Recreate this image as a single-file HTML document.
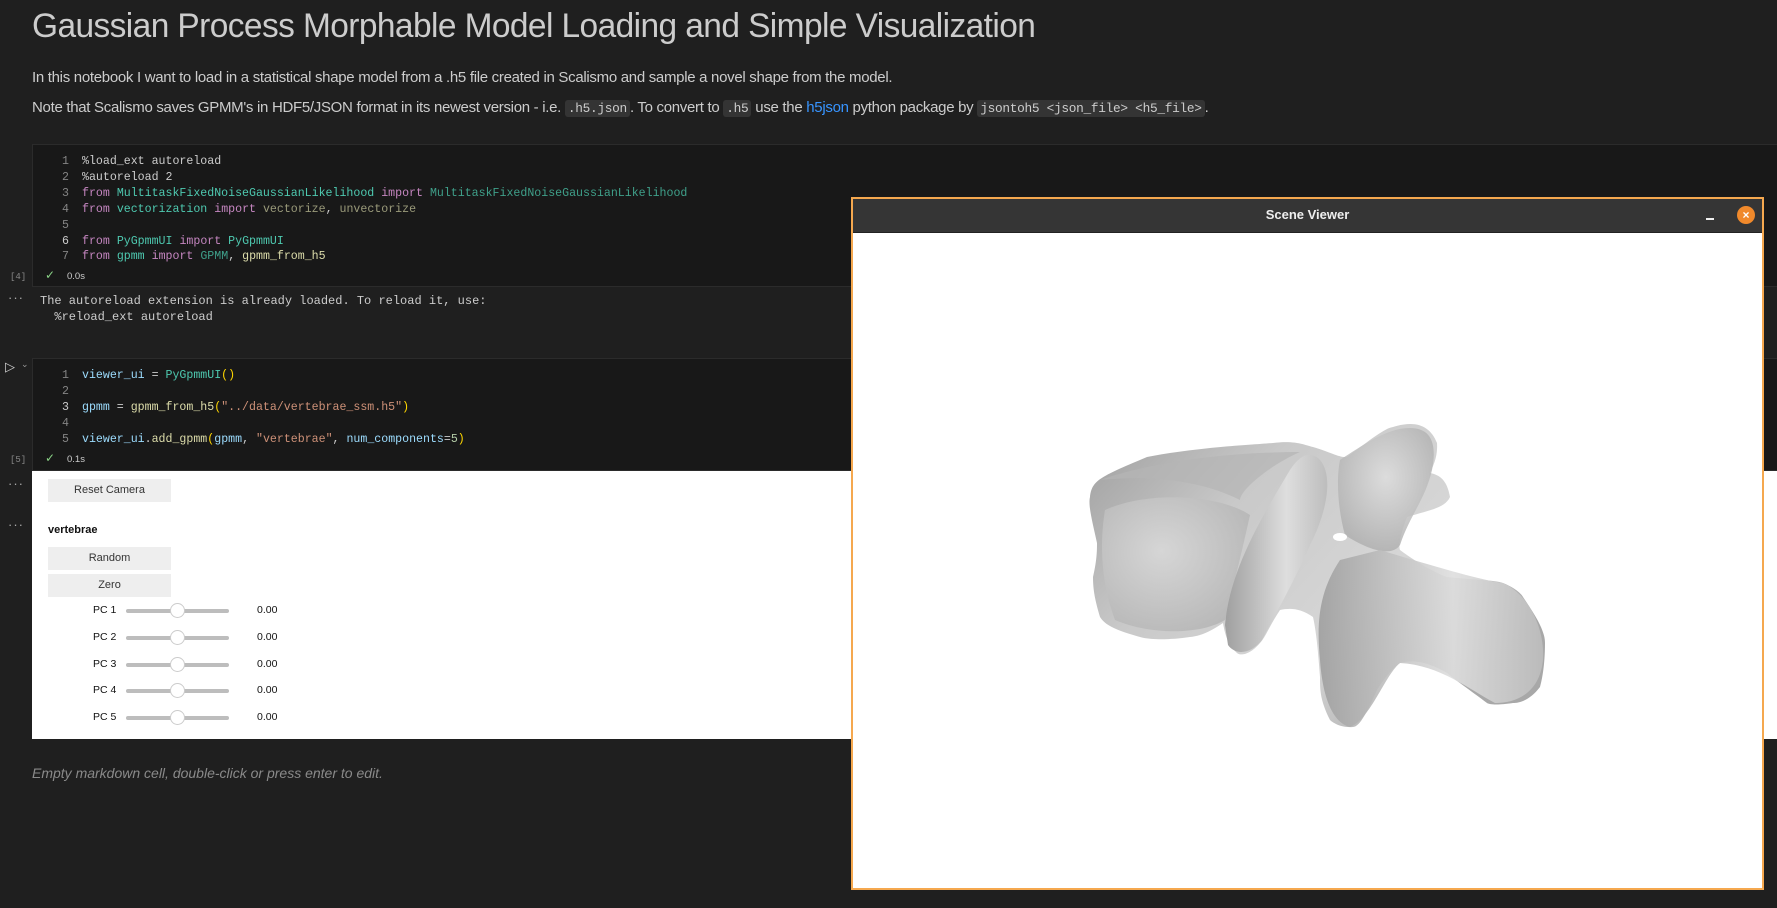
<!DOCTYPE html>
<html><head><meta charset="utf-8"><style>
*{margin:0;padding:0;box-sizing:border-box}
body{width:1777px;height:908px;background:#1f1f1f;overflow:hidden;position:relative;font-family:"Liberation Sans",sans-serif;color:#ccc}
.a{position:absolute;white-space:pre}
h1{position:absolute;left:32px;top:7px;font-weight:normal;font-size:34.5px;color:#cccccc;letter-spacing:-0.6px;transform:scaleX(0.97);transform-origin:left;white-space:nowrap}
.p{position:absolute;left:32px;font-size:15px;color:#cccccc;letter-spacing:-0.3px;white-space:nowrap}
.ic{font-family:"Liberation Mono",monospace;background:#343434;padding:1px 3px;border-radius:3px;font-size:12.8px;letter-spacing:-0.3px}
.cell{position:absolute;left:32px;right:0;background:#181818;border:1px solid #2b2b2b;border-right:none}
.code{font-family:"Liberation Mono",monospace;font-size:11.6px;color:#cccccc;position:absolute;white-space:pre}
.ln{position:absolute;width:36px;text-align:right;font-family:"Liberation Mono",monospace;font-size:11.6px;color:#858585}
.k{color:#c586c0}.m{color:#4ec9b0}.v{color:#9cdcfe}.f{color:#dcdcaa}.s{color:#ce9178}.n{color:#b5cea8}.b{color:#ffd700}.g{color:#9a9a7a}
.gut{position:absolute;font-size:9px;color:#888;font-family:"Liberation Mono",monospace}
.dots{position:absolute;left:8px;color:#aaa;font-size:13px;letter-spacing:1px}
.btn{position:absolute;left:48px;width:123px;background:#eeeeee;color:#333;font-size:11px;text-align:center}
.pc{position:absolute;left:93px;font-size:10.5px;color:#111}
.tr{position:absolute;left:126px;width:103px;height:4px;background:#bdbdbd;border-radius:2px}
.kn{position:absolute;left:170px;width:15px;height:15px;border-radius:50%;background:#fff;border:1px solid #ccc}
.val{position:absolute;left:257px;font-size:10.5px;color:#111}
</style></head><body>
<h1>Gaussian Process Morphable Model Loading and Simple Visualization</h1>
<div class="p" style="top:69px">In this notebook I want to load in a statistical shape model from a .h5 file created in Scalismo and sample a novel shape from the model.</div>
<div class="p" style="top:99px">Note that Scalismo saves GPMM's in HDF5/JSON format in its newest version - i.e. <span class="ic">.h5.json</span>. To convert to <span class="ic">.h5</span> use the <span style="color:#3794ff">h5json</span> python package by <span class="ic">jsontoh5 &lt;json_file&gt; &lt;h5_file&gt;</span>.</div>

<div class="cell" style="top:144px;height:143px"></div>
<div class="ln" style="left:33px;top:154px;line-height:15.9px">1<br>2<br>3<br>4<br>5<br><span style="color:#ccc">6</span><br>7</div>
<div class="code" style="left:82px;top:154px;line-height:15.9px">%load_ext autoreload
%autoreload 2
<span class="k">from</span> <span class="m">MultitaskFixedNoiseGaussianLikelihood</span> <span class="k">import</span> <span class="m" style="color:#3fa08a">MultitaskFixedNoiseGaussianLikelihood</span>
<span class="k">from</span> <span class="m">vectorization</span> <span class="k">import</span> <span class="g">vectorize</span>, <span class="g">unvectorize</span>

<span class="k">from</span> <span class="m">PyGpmmUI</span> <span class="k">import</span> <span class="m">PyGpmmUI</span>
<span class="k">from</span> <span class="m">gpmm</span> <span class="k">import</span> <span class="m" style="color:#3fa08a">GPMM</span>, <span class="f">gpmm_from_h5</span></div>
<div class="gut" style="left:10px;top:272px">[4]</div>
<div class="a" style="left:45px;top:268px;color:#89d185;font-size:12px">✓</div>
<div class="a" style="left:67px;top:271px;font-size:9.5px;color:#ccc">0.0s</div>
<div class="dots" style="top:290px">···</div>
<div class="code" style="left:40px;top:294px;line-height:15.9px;font-size:12px">The autoreload extension is already loaded. To reload it, use:
  %reload_ext autoreload</div>

<div class="a" style="left:5px;top:359px;color:#ccc;font-size:13px">▷</div>
<div class="a" style="left:21px;top:359px;color:#999;font-size:9px">⌄</div>
<div class="cell" style="top:358px;height:113px"></div>
<div class="ln" style="left:33px;top:368px;line-height:15.9px">1<br>2<br><span style="color:#ccc">3</span><br>4<br>5</div>
<div class="code" style="left:82px;top:368px;line-height:15.9px"><span class="v">viewer_ui</span> = <span class="m">PyGpmmUI</span><span class="b">()</span>

<span class="v">gpmm</span> = <span class="f">gpmm_from_h5</span><span class="b">(</span><span class="s">"../data/vertebrae_ssm.h5"</span><span class="b">)</span>

<span class="v">viewer_ui</span>.<span class="f">add_gpmm</span><span class="b">(</span><span class="v">gpmm</span>, <span class="s">"vertebrae"</span>, <span class="v">num_components</span>=<span class="n">5</span><span class="b">)</span></div>
<div class="gut" style="left:10px;top:455px">[5]</div>
<div class="a" style="left:45px;top:451px;color:#89d185;font-size:12px">✓</div>
<div class="a" style="left:67px;top:454px;font-size:9.5px;color:#ccc">0.1s</div>

<div style="position:absolute;left:32px;top:471px;right:0;height:268px;background:#fff"></div>
<div class="dots" style="top:476px">···</div>
<div class="dots" style="top:517px">···</div>
<div class="btn" style="top:479px;height:23px;line-height:23px">Reset Camera</div>
<div class="a" style="left:48px;top:524px;font-size:11px;font-weight:bold;color:#111">vertebrae</div>
<div class="btn" style="top:547px;height:23px;line-height:23px">Random</div>
<div class="btn" style="top:574px;height:23px;line-height:23px">Zero</div>
<div class="pc" style="top:604px">PC 1</div><div class="tr" style="top:609px"></div><div class="kn" style="top:603px"></div><div class="val" style="top:604px">0.00</div>
<div class="pc" style="top:631px">PC 2</div><div class="tr" style="top:636px"></div><div class="kn" style="top:630px"></div><div class="val" style="top:631px">0.00</div>
<div class="pc" style="top:658px">PC 3</div><div class="tr" style="top:663px"></div><div class="kn" style="top:657px"></div><div class="val" style="top:658px">0.00</div>
<div class="pc" style="top:684px">PC 4</div><div class="tr" style="top:689px"></div><div class="kn" style="top:683px"></div><div class="val" style="top:684px">0.00</div>
<div class="pc" style="top:711px">PC 5</div><div class="tr" style="top:716px"></div><div class="kn" style="top:710px"></div><div class="val" style="top:711px">0.00</div>
<div class="a" style="left:32px;top:765px;font-size:14px;font-style:italic;color:#8a8a8a">Empty markdown cell, double-click or press enter to edit.</div>

<div style="position:absolute;left:851px;top:197px;width:913px;height:693px;border:2px solid #f5a84f;background:#fff"></div>
<div style="position:absolute;left:853px;top:199px;width:909px;height:34px;background:#353535;border-bottom:1px solid #222"></div>
<div class="a" style="left:853px;width:909px;text-align:center;top:207px;font-size:13px;font-weight:bold;color:#eee">Scene Viewer</div>
<div style="position:absolute;left:1706px;top:218px;width:8px;height:2px;background:#eee"></div>
<div style="position:absolute;left:1737px;top:206px;width:18px;height:18px;border-radius:50%;background:#f0892b;color:#fff;font-size:12px;line-height:18px;text-align:center;font-weight:bold">×</div>

<svg style="position:absolute;left:0;top:0" width="1777" height="908">
<defs>
<linearGradient id="g1" x1="0" y1="0" x2="1" y2="0.6"><stop offset="0" stop-color="#9d9d9d"/><stop offset="0.35" stop-color="#c9c9c9"/><stop offset="0.7" stop-color="#d6d6d6"/><stop offset="1" stop-color="#a8a8a8"/></linearGradient>
<linearGradient id="g2" x1="0" y1="0" x2="1" y2="0"><stop offset="0" stop-color="#9f9f9f"/><stop offset="0.6" stop-color="#dedede"/><stop offset="1" stop-color="#bdbdbd"/></linearGradient>
<radialGradient id="g3" cx="0.5" cy="0.4" r="0.6"><stop offset="0" stop-color="#dedede"/><stop offset="1" stop-color="#b0b0b0"/></radialGradient>
<radialGradient id="g4" cx="0.4" cy="0.4" r="0.7"><stop offset="0" stop-color="#d8d8d8"/><stop offset="1" stop-color="#b4b4b4"/></radialGradient>
</defs>
<path fill="url(#g1)" d="M1090,497 C1092,480 1100,477 1147,457 C1200,447 1250,445 1273,443 C1295,440 1305,445 1313,447 C1330,452 1340,458 1347,457 C1370,440 1385,428 1393,427 C1415,420 1430,425 1437,443 C1438,458 1432,468 1430,473 C1440,475 1447,480 1450,497 C1445,508 1430,510 1407,517 C1402,530 1398,545 1400,550 C1420,565 1440,575 1447,577 C1475,580 1495,580 1503,583 C1520,590 1523,597 1523,597 C1535,615 1545,630 1545,643 C1545,665 1542,680 1540,687 C1530,700 1520,703 1513,703 C1500,705 1490,705 1487,703 C1470,690 1455,680 1447,673 C1425,660 1410,660 1400,663 C1390,670 1380,685 1377,690 C1368,710 1360,727 1353,727 C1340,728 1332,722 1330,720 C1320,700 1320,690 1320,677 C1318,650 1316,630 1313,617 C1300,608 1290,608 1280,610 C1270,625 1265,638 1260,643 C1250,655 1240,656 1237,653 C1228,645 1225,635 1223,623 C1210,632 1200,636 1190,637 C1170,640 1150,640 1140,637 C1115,630 1105,625 1100,617 C1095,600 1093,590 1093,577 C1097,560 1097,550 1097,543 C1092,520 1088,505 1090,497 Z"/>
<path fill="#b5b5b5" opacity="0.7" d="M1100,480 C1150,462 1230,452 1300,452 C1270,465 1240,490 1240,500 C1200,480 1150,475 1100,480 Z"/>
<path fill="url(#g4)" opacity="0.9" d="M1105,510 C1150,490 1220,495 1250,515 C1240,560 1230,600 1225,620 C1200,635 1150,635 1115,620 C1100,580 1100,540 1105,510 Z"/>
<path fill="url(#g3)" opacity="0.85" d="M1340,460 C1370,440 1390,428 1410,428 C1432,428 1437,445 1432,470 C1425,500 1410,515 1400,545 C1390,560 1360,545 1345,535 C1338,510 1336,480 1340,460 Z"/>
<path fill="url(#g2)" opacity="0.9" d="M1380,550 C1430,565 1480,580 1503,583 C1530,595 1545,630 1543,660 C1540,690 1520,703 1495,703 C1470,690 1440,665 1400,663 C1385,675 1370,720 1350,727 C1330,722 1322,690 1320,660 C1316,620 1320,590 1340,560 Z"/>
<path fill="url(#g2)" d="M1225,625 C1230,570 1260,520 1290,470 C1300,455 1310,450 1320,460 C1333,475 1328,510 1310,545 C1295,580 1275,615 1262,640 C1250,655 1235,655 1228,645 Z"/>
<ellipse cx="1340" cy="537" rx="7" ry="4" fill="#fff"/>
</svg>
</body></html>
